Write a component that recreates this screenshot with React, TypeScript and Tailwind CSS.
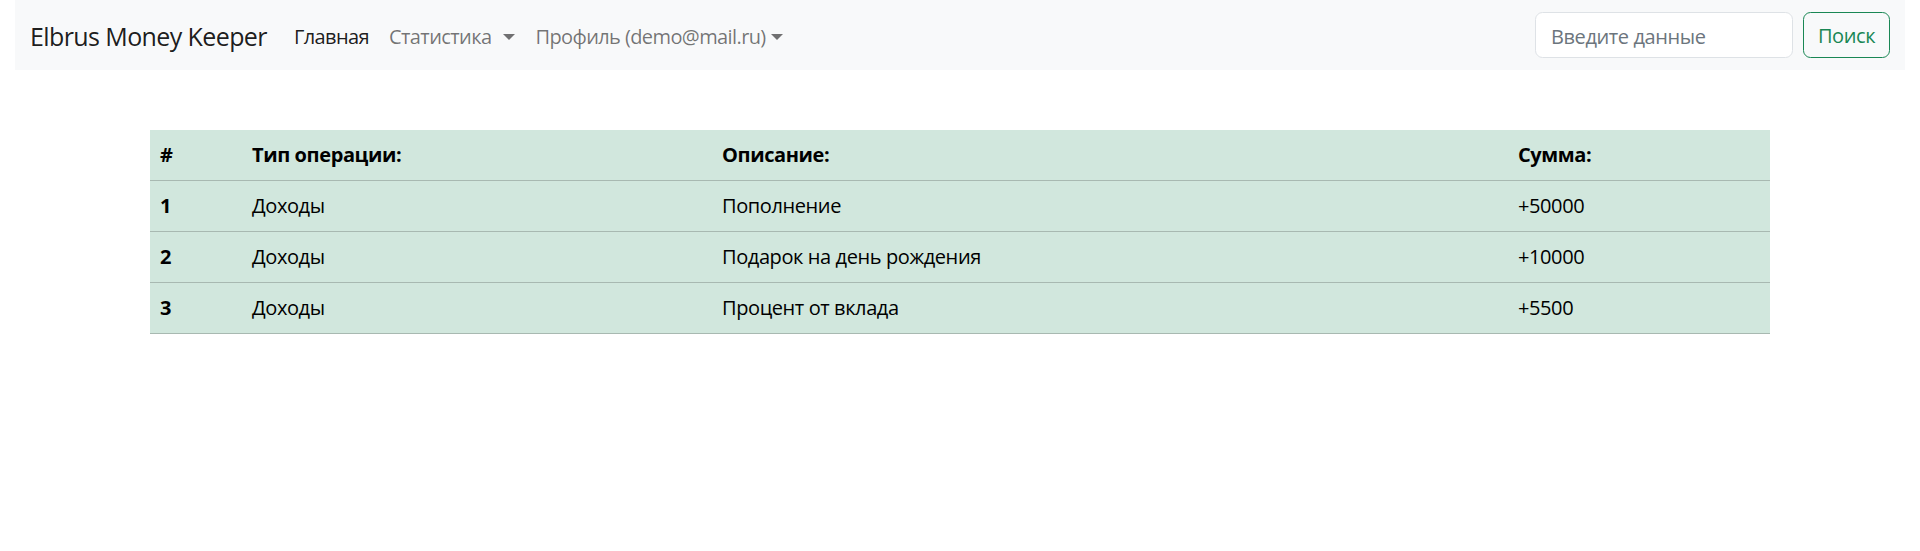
import React from "react";

const rows = [
  { id: 1, type: "Доходы", desc: "Пополнение", sum: "+50000" },
  { id: 2, type: "Доходы", desc: "Подарок на день рождения", sum: "+10000" },
  { id: 3, type: "Доходы", desc: "Процент от вклада", sum: "+5500" },
];

function Caret({ wide }: { wide?: boolean }) {
  return (
    <span
      className={
        wide
          ? "inline-block ml-[12px] w-0 h-0 border-t-[6px] border-t-current border-x-[6px] border-x-transparent"
          : "inline-block ml-[5px] w-0 h-0 border-t-[6px] border-t-current border-x-[6px] border-x-transparent"
      }
    />
  );
}

export default function App() {
  return (
    <div
      className="min-h-[551px] bg-white text-[20px] leading-[30px] tracking-[-0.4px] text-[#212529]"
      style={{ fontFamily: '"Open Sans", "Noto Sans", sans-serif' }}
    >
      {/* навбар */}
      <div className="px-[15px]">
        <nav className="h-[70px] bg-[#f8f9fa] flex items-center px-[15px]">
          <span className="text-[25px] leading-[38px] tracking-[-0.6px] text-black/90 mr-[17px] mt-[2px]">Elbrus Money Keeper</span>
          <ul className="flex items-center mt-[4px] tracking-[-0.6px]">
            <li className="px-[10px] text-black/90">Главная</li>
            <li className="px-[10px] text-black/55 flex items-center">
              Статистика
              <Caret wide />
            </li>
            <li className="px-[10px] text-black/55 flex items-center">
              Профиль (demo@mail.ru)
              <Caret />
            </li>
          </ul>
          <div className="ml-auto flex items-center gap-[10px]">
            <input
              className="w-[258px] h-[46px] rounded-[7.5px] border border-[#dee2e6] bg-white px-[15px] pt-[2px] text-[20px] placeholder:text-[#6c757d] outline-none"
              placeholder="Введите данные"
            />
            <button className="h-[46px] w-[87px] rounded-[7.5px] border border-[#198754] pt-[2px] text-[#198754] text-[20px]">
              Поиск
            </button>
          </div>
        </nav>
      </div>

      {/* таблица операций */}
      <div className="w-[1620px] mx-auto mt-[60px]">
        <table className="w-full border-collapse bg-[#d1e7dd] text-black">
          <thead>
            <tr className="border-b border-[#a8b9b1] font-bold text-left">
              <th className="w-[92px] p-[10px]">#</th>
              <th className="w-[470px] p-[10px]">Тип операции:</th>
              <th className="w-[796px] p-[10px]">Описание:</th>
              <th className="p-[10px]">Сумма:</th>
            </tr>
          </thead>
          <tbody>
            {rows.map((r) => (
              <tr key={r.id} className="border-b border-[#a8b9b1]">
                <th className="p-[10px] text-left font-bold">{r.id}</th>
                <td className="p-[10px]">{r.type}</td>
                <td className="p-[10px]">{r.desc}</td>
                <td className="p-[10px]">{r.sum}</td>
              </tr>
            ))}
          </tbody>
        </table>
      </div>
    </div>
  );
}
